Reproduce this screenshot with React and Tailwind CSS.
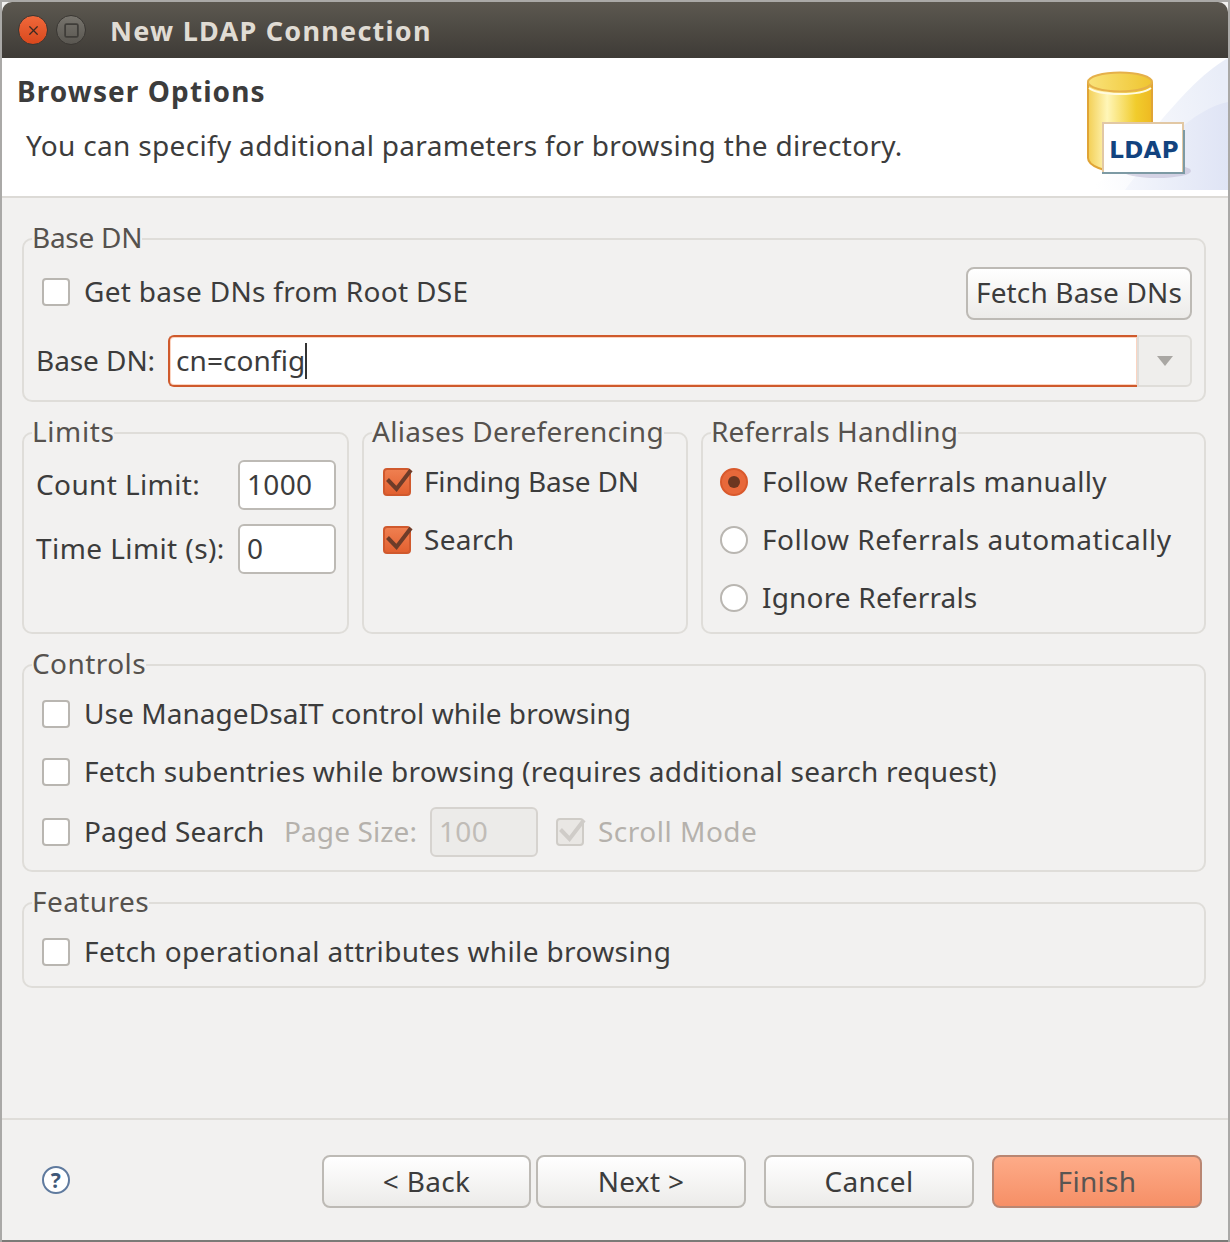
import React from 'react';
import { X, Square } from 'lucide-react';

// Caja de grupo con leyenda sobre el borde
function Group({ title, titleClass = '', className = '', inner = '', children }) {
  return (
    <fieldset className={`min-w-0 rounded-[10px] border-2 border-[#dfddd9] ${className}`}>
      <legend className="ml-[8px] leading-[28px] text-[#56524e]">
        <span className={`relative -top-[2px] ${titleClass}`}>{title}</span>
      </legend>
      <div className={inner}>{children}</div>
    </fieldset>
  );
}

function Check({ checked, disabled }) {
  const box = disabled
    ? 'border-[#cfccc7] bg-[#e9e7e4]'
    : checked
      ? 'border-[#d0592d] bg-gradient-to-b from-[#ef7f50] to-[#e2602f]'
      : 'border-[#b9b6b1] bg-white';
  const mark = disabled ? '#cfccc8' : '#6d3c29';
  return (
    <span className={`relative block h-[28px] w-[28px] shrink-0 rounded-[4px] border-2 ${box}`}>
      {checked && (
        <svg className="absolute -left-[2px] -top-[2px] overflow-visible" width="30" height="28" viewBox="0 0 30 28" fill="none">
          <path d="M4.5 11.5 L13.5 21 L28 2" stroke={mark} strokeWidth="4" />
        </svg>
      )}
    </span>
  );
}

function Radio({ checked }) {
  return (
    <span
      className={`flex h-[28px] w-[28px] shrink-0 items-center justify-center rounded-full border-2 ${
        checked ? 'border-[#d9592c] bg-[#e8683a]' : 'border-[#b9b6b1] bg-white'
      }`}
    >
      {checked && <span className="h-[12px] w-[12px] rounded-full bg-[#6d3620]" />}
    </span>
  );
}

function Row({ children, className = '' }) {
  return <div className={`flex h-[28px] items-center ${className}`}>{children}</div>;
}

// Texto de fila, subido 1px respecto al centro
function Label({ children, className = '' }) {
  return <span className={`whitespace-nowrap pb-[2px] ${className}`}>{children}</span>;
}

function NavButton({ label, primary, className = '' }) {
  return (
    <button
      className={`h-[53px] rounded-[8px] border-2 pb-[2px] ${
        primary
          ? 'border-[#b98672] bg-gradient-to-b from-[#fdab88] to-[#f68f66] text-[#5a5552]'
          : 'border-[#bdbab5] bg-gradient-to-b from-white to-[#ecebe9] text-[#3c3c3c]'
      } ${className}`}
    >
      {label}
    </button>
  );
}

function Banner() {
  return (
    <svg width="143" height="132" viewBox="0 0 143 132" className="shrink-0">
      <defs>
        <linearGradient id="cyl" x1="0" x2="1" y1="0" y2="0">
          <stop offset="0" stopColor="#f3cf55" />
          <stop offset="0.3" stopColor="#fff6b8" />
          <stop offset="0.75" stopColor="#f1cc2c" />
          <stop offset="1" stopColor="#eeb922" />
        </linearGradient>
        <linearGradient id="bg1" x1="0" x2="1" y1="0.6" y2="0.4">
          <stop offset="0" stopColor="#ffffff" />
          <stop offset="1" stopColor="#e9edf8" />
        </linearGradient>
        <linearGradient id="bg2" x1="0" x2="1" y1="0" y2="0">
          <stop offset="0" stopColor="#f4f6fc" />
          <stop offset="1" stopColor="#dfe4f5" />
        </linearGradient>
        <linearGradient id="lid" x1="0" x2="1" y1="0" y2="0">
          <stop offset="0" stopColor="#f9e27a" />
          <stop offset="1" stopColor="#efc52f" />
        </linearGradient>
      </defs>
      <path d="M0 132 C50 110 90 30 143 0 L143 132 Z" fill="url(#bg1)" />
      <path d="M40 132 C70 90 110 50 143 44 L143 132 Z" fill="url(#bg2)" />
      <ellipse cx="72" cy="113" rx="34" ry="7" fill="#b9b3cd" opacity="0.5" />
      <path d="M3 25 L3 100 C3 108 20 114 36 114 C52 114 67 108 67 100 L67 25 Z" fill="url(#cyl)" stroke="#e0a436" strokeWidth="2" />
      <ellipse cx="35" cy="24" rx="32" ry="9.5" fill="url(#lid)" stroke="#e5b04a" strokeWidth="2" />
      <path d="M4 30 C14 38 56 38 66 30" fill="none" stroke="#fffbe0" strokeWidth="2" />
      <rect x="18" y="65" width="80" height="50" fill="#ffffff" stroke="#e2c8a4" strokeWidth="2" />
      <path d="M17 115 L99 115 L99 72" fill="none" stroke="#7d9aa4" strokeWidth="2" />
      <text x="59" y="100" textAnchor="middle" fontFamily="'DejaVu Sans', sans-serif" fontSize="23" fontWeight="700" fill="#12437f">LDAP</text>
    </svg>
  );
}

export default function App() {
  return (
    <div className="h-[1242px] w-[1230px] bg-[#aaa9a7] px-[2px] pt-[2px] font-['Noto_Sans',sans-serif] text-[28px] tracking-[0.3px] text-[#3c3c3c]">
      <div className="flex h-full flex-col border-b-2 border-[#7b7a77] bg-[#f2f1f0]">
        {/* barra de titulo */}
        <div className="flex h-[56px] shrink-0 items-center rounded-t-[10px] bg-gradient-to-b from-[#5c5850] to-[#3e3b36] pl-[16px]">
          <span className="flex h-[30px] w-[30px] items-center justify-center rounded-full border border-[#3a3733] bg-gradient-to-b from-[#f0683a] to-[#d9481c]">
            <X size={15} strokeWidth={2} className="text-[#3c2a22]" />
          </span>
          <span className="ml-[8px] flex h-[30px] w-[30px] items-center justify-center rounded-full border border-[#3a3733] bg-gradient-to-b from-[#77746d] to-[#5a5751]">
            <Square size={17} strokeWidth={2.5} className="text-[#3f3d39]" />
          </span>
          <span className="mt-[2px] ml-[24px] text-[27px] font-bold tracking-[1.25px] text-[#e0dcd4]">New LDAP Connection</span>
        </div>

        {/* cabecera */}
        <div className="flex h-[140px] shrink-0 justify-between border-b-2 border-[#dcdad6] bg-white">
          <div className="pl-[15px]">
            <div className="mt-[16px] leading-[34px] font-bold tracking-[1.1px]">Browser Options</div>
            <div className="mt-[20px] ml-[9px] leading-[34px] tracking-[0.32px]">You can specify additional parameters for browsing the directory.</div>
          </div>
          <Banner />
        </div>

        {/* contenido */}
        <div className="flex flex-1 flex-col gap-[17px] pt-[27px] pr-[22px] pl-[20px]">
          <Group title="Base DN" titleClass="tracking-[-0.27px]" inner="pt-[14px] pr-[12px] pb-[13px] pl-[16px]">
            <div className="flex h-[53px] items-start justify-between">
              <Row className="mt-[11px] gap-[14px] pl-[2px]">
                <Check />
                <Label>Get base DNs from Root DSE</Label>
              </Row>
              <button className="h-[53px] w-[226px] rounded-[8px] border-2 border-[#bdbab5] bg-gradient-to-b from-white to-[#ecebe9] pb-[3px] tracking-[0.15px]">
                Fetch Base DNs
              </button>
            </div>
            <div className="mt-[15px] flex h-[52px] items-center">
              <Label className="-ml-[4px] w-[132px] shrink-0 tracking-[-0.07px]">Base DN:</Label>
              <div className="flex h-[52px] min-w-0 flex-1 items-center rounded-l-[6px] border-2 border-r-0 border-[#cf5a2c] bg-white pl-[6px] shadow-[inset_0_0_0_1px_#fbd4c1]">
                <Label className="tracking-[0.08px]">cn=config</Label>
                <span className="h-[36px] w-[2px] bg-[#333333]" />
              </div>
              <div className="flex h-[52px] w-[55px] shrink-0 items-center justify-center rounded-r-[6px] border-2 border-[#dfddd9] bg-[#efeeec]">
                <span className="h-0 w-0 border-x-[8px] border-t-[10px] border-x-transparent border-t-[#a9a7a3]" />
              </div>
            </div>
          </Group>

          <div className="flex gap-[13px]">
            <Group title="Limits" titleClass="tracking-[0.6px]" className="h-[215px] w-[327px] shrink-0" inner="pt-[13px] pl-[12px]">
              <div className="flex h-[50px] items-center">
                <Label className="w-[202px] shrink-0 tracking-[0.38px]">Count Limit:</Label>
                <div className="flex h-[50px] w-[98px] items-center rounded-[6px] border-2 border-[#bdbab5] bg-white pb-[2px] pl-[7px]">1000</div>
              </div>
              <div className="mt-[14px] flex h-[50px] items-center">
                <Label className="w-[202px] shrink-0 tracking-[0.42px]">Time Limit (s):</Label>
                <div className="flex h-[50px] w-[98px] items-center rounded-[6px] border-2 border-[#bdbab5] bg-white pb-[2px] pl-[7px]">0</div>
              </div>
            </Group>
            <Group title="Aliases Dereferencing" className="h-[215px] w-[326px] shrink-0" inner="flex flex-col gap-[30px] pt-[21px] pl-[19px]">
              <Row className="gap-[13px]"><Check checked /><Label className="tracking-[-0.17px]">Finding Base DN</Label></Row>
              <Row className="gap-[13px]"><Check checked /><Label>Search</Label></Row>
            </Group>
            <Group title="Referrals Handling" titleClass="tracking-[0.13px]" className="h-[215px] flex-1" inner="flex flex-col gap-[30px] pt-[21px] pl-[17px]">
              <Row className="gap-[14px]"><Radio checked /><Label>Follow Referrals manually</Label></Row>
              <Row className="gap-[14px]"><Radio /><Label className="tracking-[0.53px]">Follow Referrals automatically</Label></Row>
              <Row className="gap-[14px]"><Radio /><Label className="tracking-[0.18px]">Ignore Referrals</Label></Row>
            </Group>
          </div>

          <Group title="Controls" titleClass="tracking-[0.42px]" className="h-[221px]" inner="flex flex-col gap-[30px] pt-[21px] pl-[18px]">
            <Row className="gap-[14px]"><Check /><Label className="tracking-[0.06px]">Use ManageDsaIT control while browsing</Label></Row>
            <Row className="gap-[14px]"><Check /><Label className="tracking-[0.23px]">Fetch subentries while browsing (requires additional search request)</Label></Row>
            <Row className="mt-[2px] gap-[14px]">
              <Check />
              <Label className="w-[186px] shrink-0 tracking-[0.13px]">Paged Search</Label>
              <Label className="w-[132px] shrink-0 tracking-[0.1px] text-[#b5b1ac]">Page Size:</Label>
              <div className="flex h-[50px] w-[108px] shrink-0 items-center rounded-[6px] border-2 border-[#d6d3cf] bg-[#ecebe9] pb-[2px] pl-[7px] text-[#c0bcb7]">100</div>
              <span className="ml-[4px]"><Check checked disabled /></span>
              <Label className="tracking-[0.5px] text-[#b5b1ac]">Scroll Mode</Label>
            </Row>
          </Group>

          <Group title="Features" titleClass="tracking-[0.42px]" className="h-[99px]" inner="pt-[21px] pl-[18px]">
            <Row className="gap-[14px]"><Check /><Label className="tracking-[0.37px]">Fetch operational attributes while browsing</Label></Row>
          </Group>
        </div>

        {/* pie con botones */}
        <div className="flex h-[122px] shrink-0 items-start border-t-2 border-[#dfddd9] pt-[35px] pr-[26px]">
          <div className="mt-[11px] ml-[40px] flex h-[28px] w-[28px] items-center justify-center rounded-full border-2 border-[#5f7a9e] bg-white text-[21px] leading-none font-bold text-[#3f5878]">?</div>
          <div className="ml-auto flex">
            <NavButton label="< Back" className="w-[209px]" />
            <NavButton label="Next >" className="ml-[5px] w-[210px]" />
            <NavButton label="Cancel" className="ml-[18px] w-[210px]" />
            <NavButton label="Finish" primary className="ml-[18px] w-[210px]" />
          </div>
        </div>
      </div>
    </div>
  );
}
